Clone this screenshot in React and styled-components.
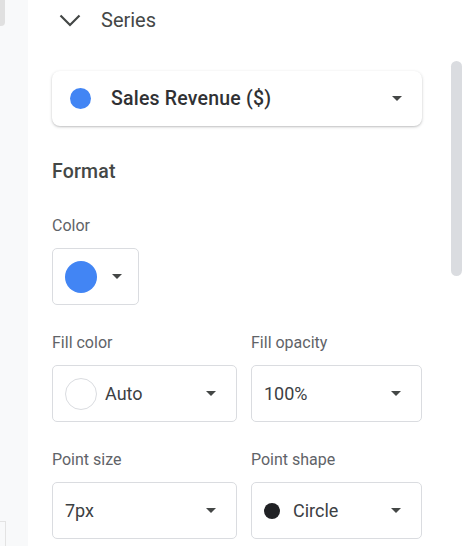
import styled, { createGlobalStyle } from "styled-components";

const Global = createGlobalStyle`
  html, body {
    margin: 0;
    padding: 0;
    background: #ffffff;
  }
  body {
    font-family: Roboto, "Noto Sans", Arial, sans-serif;
    overflow: hidden;
  }
`;

const Page = styled.div`
  display: flex;
  width: 468px;
  height: 546px;
  overflow: hidden;
`;

const Rail = styled.div`
  width: 28px;
  flex: none;
  display: flex;
  flex-direction: column;
  justify-content: space-between;
  background: #f8f9fa;
`;

const RailTab = styled.div`
  width: 5px;
  height: 26px;
  background: #e0e0e0;
  border-bottom-right-radius: 4px;
`;

const RailFoot = styled.div`
  width: 5px;
  height: 24px;
  border-top: 1px solid #e3e3e3;
  border-right: 1px solid #e3e3e3;
`;

const Panel = styled.div`
  position: relative;
  flex: 1;
  background: #ffffff;
  padding-left: 24px;
`;

const Content = styled.div`
  width: 370px;
`;

const Header = styled.div`
  display: flex;
  align-items: center;
  gap: 20px;
  height: 40px;
  padding-left: 7px;
  font-size: 20px;
  color: #444746;
`;

const SeriesCard = styled.div`
  margin-top: 31px;
  height: 55px;
  display: flex;
  align-items: center;
  padding: 0 20px 0 18px;
  border-radius: 8px;
  background: #fff;
  box-shadow: 0 1px 3px rgba(60, 64, 67, 0.28), 0 1px 1px rgba(60, 64, 67, 0.08);
`;

const Dot = styled.span`
  flex: none;
  width: ${(p) => p.$size}px;
  height: ${(p) => p.$size}px;
  border-radius: 50%;
  background: ${(p) => p.$color || "transparent"};
  border: ${(p) => (p.$hollow ? "1px solid #dadce0" : "none")};
  box-sizing: border-box;
`;

const CardText = styled.span`
  flex: 1;
  margin-left: 20px;
  font-size: 19.5px;
  font-weight: 500;
  color: #303134;
  letter-spacing: 0.2px;
`;

const Caret = styled.span`
  flex: none;
  width: 0;
  height: 0;
  border-left: 5px solid transparent;
  border-right: 5px solid transparent;
  border-top: 5px solid #444746;
`;

const SectionTitle = styled.div`
  margin-top: 34px;
  line-height: 24px;
  font-size: 19.5px;
  font-weight: 500;
  color: #444746;
  letter-spacing: 0.2px;
`;

const Field = styled.div`
  display: flex;
  flex-direction: column;
  gap: 12px;
`;

const FieldRow = styled.div`
  display: grid;
  grid-template-columns: 185px 171px;
  column-gap: 14px;
  margin-top: ${(p) => p.$top}px;
`;

const Label = styled.div`
  line-height: 20px;
  font-size: 16px;
  color: #5f6368;
`;

const SelectBox = styled.div`
  display: flex;
  align-items: center;
  gap: ${(p) => p.$gap || 8}px;
  width: ${(p) => (p.$width ? `${p.$width}px` : "auto")};
  height: 57px;
  box-sizing: border-box;
  padding: 0 20px 0 12px;
  border: 1px solid #dadce0;
  border-radius: 5px;
`;

const Value = styled.span`
  flex: 1;
  font-size: 18px;
  color: #3c4043;
`;

const ScrollThumb = styled.div`
  position: absolute;
  top: 61px;
  right: 6px;
  width: 11px;
  height: 215px;
  border-radius: 6px;
  background: #dadce0;
`;

const Chevron = () => (
  <svg width="22" height="13" viewBox="0 0 22 13" fill="none">
    <path d="M1.5 1.5 L11 11 L20.5 1.5" stroke="#444746" strokeWidth="2.2" />
  </svg>
);

export default function App() {
  return (
    <>
      <Global />
      <Page>
        <Rail>
          <RailTab />
          <RailFoot />
        </Rail>
        <Panel>
          <Content>
            <Header>
              <Chevron />
              <span>Series</span>
            </Header>

            <SeriesCard>
              <Dot $size={21} $color="#4285f4" />
              <CardText>Sales Revenue ($)</CardText>
              <Caret />
            </SeriesCard>

            <SectionTitle>Format</SectionTitle>

            <FieldRow $top={32}>
              <Field>
                <Label>Color</Label>
                <SelectBox $width={87} $gap={15}>
                  <Dot $size={32} $color="#4285f4" />
                  <Caret />
                </SelectBox>
              </Field>
            </FieldRow>

            <FieldRow $top={28}>
              <Field>
                <Label>Fill color</Label>
                <SelectBox>
                  <Dot $size={32} $hollow />
                  <Value>Auto</Value>
                  <Caret />
                </SelectBox>
              </Field>
              <Field>
                <Label>Fill opacity</Label>
                <SelectBox>
                  <Value>100%</Value>
                  <Caret />
                </SelectBox>
              </Field>
            </FieldRow>

            <FieldRow $top={28}>
              <Field>
                <Label>Point size</Label>
                <SelectBox>
                  <Value>7px</Value>
                  <Caret />
                </SelectBox>
              </Field>
              <Field>
                <Label>Point shape</Label>
                <SelectBox $gap={13}>
                  <Dot $size={16} $color="#202124" />
                  <Value>Circle</Value>
                  <Caret />
                </SelectBox>
              </Field>
            </FieldRow>
          </Content>
          <ScrollThumb />
        </Panel>
      </Page>
    </>
  );
}
